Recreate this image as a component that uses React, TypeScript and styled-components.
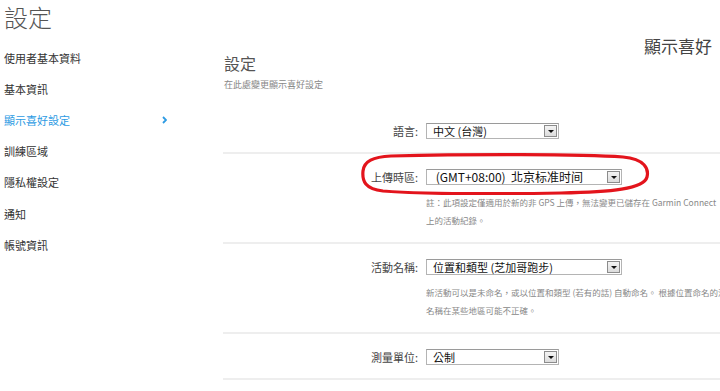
import React from "react";
import styled, { createGlobalStyle } from "styled-components";

const GlobalStyle = createGlobalStyle`
  html, body {
    margin: 0;
    padding: 0;
    background: #fff;
    overflow: hidden;
  }
  body {
    font-family: "Noto Sans CJK TC", "Noto Sans", sans-serif;
    color: #333;
  }
`;

const Page = styled.div`
  width: 720px;
  height: 391px;
  overflow: hidden;
`;

const PageTitle = styled.h1`
  margin: 0;
  padding-left: 4px;
  height: 34px;
  font-size: 24px;
  line-height: 34px;
  font-weight: 300;
  color: #555;
`;

const Body = styled.div`
  display: flex;
`;

const SideNav = styled.ul`
  list-style: none;
  margin: 0;
  padding: 8px 0 0 4px;
  width: 219px;
  flex-shrink: 0;
`;

const SideItem = styled.li<{ $active?: boolean }>`
  display: flex;
  align-items: center;
  justify-content: space-between;
  width: 163px;
  height: 31.2px;
  font-size: 11px;
  color: ${(p) => (p.$active ? "#2d9be3" : "#333")};
`;

const Chevron = () => (
  <svg width="5" height="8" viewBox="0 0 5 8">
    <polyline points="1,1 4,4 1,7" fill="none" stroke="#2d9be3" strokeWidth="1.8" />
  </svg>
);

const Main = styled.main`
  flex: 1;
  min-width: 0;
  padding-top: 2px;
`;

const SectionHeading = styled.div`
  text-align: right;
  padding-right: 8px;
  font-size: 17px;
  line-height: 20px;
  color: #444;
`;

const MainTitle = styled.h2`
  margin: -2px 0 0;
  padding-left: 1px;
  font-size: 16px;
  line-height: 18px;
  font-weight: 400;
  color: #555;
`;

const Subtitle = styled.p`
  margin: 6px 0 16px 1px;
  font-size: 9px;
  line-height: 14px;
  color: #888;
`;

const SettingRow = styled.div`
  position: relative;
  display: grid;
  grid-template-columns: 195px 1fr;
  column-gap: 8px;
  padding: 15px 0 13px;
  border-bottom: 2px solid #eeeeee;
`;

const Label = styled.label`
  text-align: right;
  font-size: 11px;
  line-height: 16px;
  color: #444;
`;

const Field = styled.div`
  min-width: 0;
  overflow: hidden;
`;

const SelectBox = styled.div<{ $width: number }>`
  box-sizing: border-box;
  display: flex;
  align-items: center;
  width: ${(p) => p.$width}px;
  height: 16px;
  border: 1px solid #b4b4b4;
  border-top-color: #9a9a9a;
  background: #fff;
  padding: 0 1px 0 6px;
`;

const SelectValue = styled.span<{ $size?: number }>`
  flex: 1;
  font-size: ${(p) => p.$size ?? 11}px;
  line-height: 14px;
  color: #111;
  white-space: pre;
`;

const ArrowButton = styled.span`
  box-sizing: border-box;
  width: 13px;
  height: 12px;
  border: 1px solid #8c8c8c;
  background: linear-gradient(#f4f4f4, #dcdcdc);
  display: flex;
  align-items: center;
  justify-content: center;
  &::after {
    content: "";
    border-left: 3px solid transparent;
    border-right: 3px solid transparent;
    border-top: 3px solid #111;
  }
`;

const Note = styled.p`
  margin: 8px 0 0;
  font-size: 8.5px;
  line-height: 18px;
  color: #888;
  white-space: nowrap;
`;

const Annotation = styled.svg`
  position: absolute;
  left: 138px;
  top: -1px;
  pointer-events: none;
`;

const Select = ({ value, width, size }: { value: string; width: number; size?: number }) => (
  <SelectBox $width={width}>
    <SelectValue $size={size}>{value}</SelectValue>
    <ArrowButton />
  </SelectBox>
);

const navItems = ["使用者基本資料", "基本資訊", "顯示喜好設定", "訓練區域", "隱私權設定", "通知", "帳號資訊"];

export default function App() {
  return (
    <Page>
      <GlobalStyle />
      <PageTitle>設定</PageTitle>
      <Body>
        <SideNav>
          {navItems.map((item) => (
            <SideItem key={item} $active={item === "顯示喜好設定"}>
              {item}
              {item === "顯示喜好設定" && <Chevron />}
            </SideItem>
          ))}
        </SideNav>
        <Main>
          <SectionHeading>顯示喜好</SectionHeading>
          <MainTitle>設定</MainTitle>
          <Subtitle>在此處變更顯示喜好設定</Subtitle>

          <SettingRow>
            <Label>語言:</Label>
            <Field>
              <Select value="中文 (台灣)" width={133} />
            </Field>
          </SettingRow>

          <SettingRow>
            <Label>上傳時區:</Label>
            <Field>
              <Select value=" (GMT+08:00)  北京标准时间" width={196} size={12} />
              <Note>
                註：此項設定僅適用於新的非 GPS 上傳，無法變更已儲存在 Garmin Connect
                <br />
                上的活動紀錄。
              </Note>
            </Field>
            <Annotation width="290" height="42" viewBox="0 0 290 42">
              <path
                d="M30 3 C 110 1, 220 1, 262 4 C 284 6, 288 16, 286 24 C 283 36, 250 39, 200 40 C 140 41, 60 41, 22 38 C 4 36, 1 28, 2 18 C 3 8, 12 4, 30 3 Z"
                fill="none"
                stroke="#e3141c"
                strokeWidth="3.2"
              />
            </Annotation>
          </SettingRow>

          <SettingRow>
            <Label>活動名稱:</Label>
            <Field>
              <Select value="位置和類型 (芝加哥跑步)" width={196} />
              <Note>
                新活動可以是未命名，或以位置和類型 (若有的話) 自動命名。 根據位置命名的活動
                <br />
                名稱在某些地區可能不正確。
              </Note>
            </Field>
          </SettingRow>

          <SettingRow>
            <Label>測量單位:</Label>
            <Field>
              <Select value="公制" width={133} />
            </Field>
          </SettingRow>
        </Main>
      </Body>
    </Page>
  );
}
